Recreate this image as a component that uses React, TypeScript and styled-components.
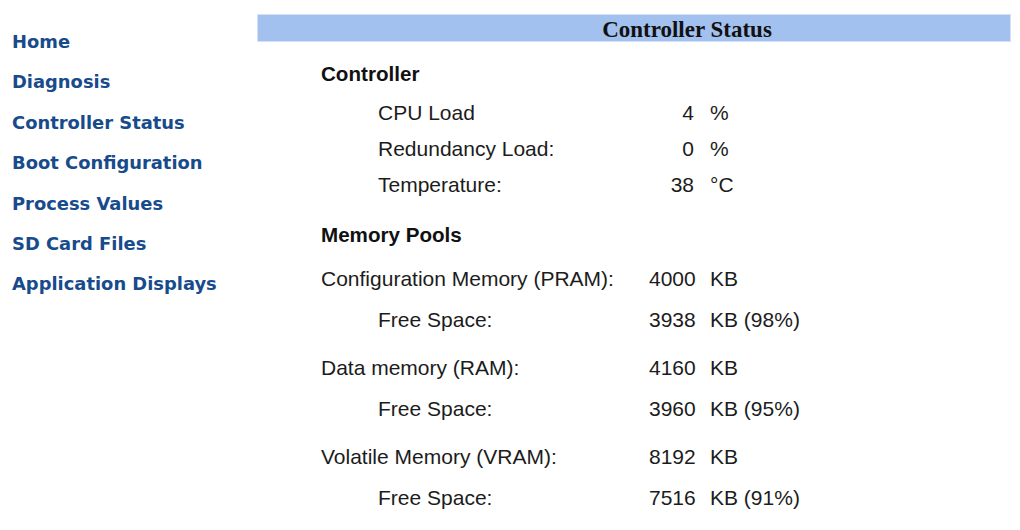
import React from "react";
import styled, { createGlobalStyle } from "styled-components";

const GlobalStyle = createGlobalStyle`
  html, body {
    margin: 0;
    padding: 0;
    background: #ffffff;
  }
  body {
    font-family: "Liberation Sans", Arial, sans-serif;
    color: #1c1c1c;
  }
`;

const Page = styled.div`
  display: flex;
  width: 1020px;
  height: 530px;
  overflow: hidden;
`;

const Sidebar = styled.nav`
  display: flex;
  flex-direction: column;
  width: 245px;
  flex: none;
  padding: 22px 0 0 12px;
`;

const NavLink = styled.a`
  display: block;
  font-family: "DejaVu Sans", Verdana, sans-serif;
  font-weight: bold;
  font-size: 17.9px;
  line-height: 40.4px;
  color: #174b8b;
  text-decoration: none;
  white-space: nowrap;
`;

const Main = styled.main`
  flex: 1;
  margin-right: 9px;
  padding-top: 14px;
`;

const TitleBar = styled.div`
  height: 26px;
  border: 1px solid #d3e0f6;
  background: #a2c1ef;
  padding-left: 106px;
  text-align: center;
  font-family: "Liberation Serif", "Times New Roman", serif;
  font-weight: bold;
  font-size: 23px;
  line-height: 30px;
  color: #111111;
`;

const Content = styled.div`
  padding-left: 64px;
`;

const Heading = styled.div<{ $after: number }>`
  margin: 17px 0 ${(p) => p.$after}px;
  height: 30px;
  line-height: 30px;
  font-weight: bold;
  font-size: 20.6px;
  color: #111111;
`;

const Groups = styled.div`
  display: flex;
  flex-direction: column;
  gap: 8px;
`;

const Row = styled.div<{ $h: number }>`
  display: grid;
  grid-template-columns: 312px 45px auto;
  column-gap: 16px;
  align-items: center;
  height: ${(p) => p.$h}px;
  font-size: 21px;
  white-space: nowrap;
`;

const Label = styled.span<{ $indent?: boolean }>`
  padding-left: ${(p) => (p.$indent ? 57 : 0)}px;
`;

const Value = styled.span`
  text-align: right;
`;

const Unit = styled.span``;

const NAV = [
  "Home",
  "Diagnosis",
  "Controller Status",
  "Boot Configuration",
  "Process Values",
  "SD Card Files",
  "Application Displays",
];

const CONTROLLER = [
  { label: "CPU Load", value: "4", unit: "%" },
  { label: "Redundancy Load:", value: "0", unit: "%" },
  { label: "Temperature:", value: "38", unit: "°C" },
];

const MEMORY = [
  { label: "Configuration Memory (PRAM):", total: "4000", free: "3938", pct: "98%" },
  { label: "Data memory (RAM):", total: "4160", free: "3960", pct: "95%" },
  { label: "Volatile Memory (VRAM):", total: "8192", free: "7516", pct: "91%" },
];

export default function App() {
  return (
    <Page>
      <GlobalStyle />
      <Sidebar>
        {NAV.map((item) => (
          <NavLink key={item} href="#">
            {item}
          </NavLink>
        ))}
      </Sidebar>

      <Main>
        <TitleBar>Controller Status</TitleBar>
        <Content>
          <Heading $after={6}>Controller</Heading>
          {CONTROLLER.map((row) => (
            <Row key={row.label} $h={36}>
              <Label $indent>{row.label}</Label>
              <Value>{row.value}</Value>
              <Unit>{row.unit}</Unit>
            </Row>
          ))}

          <Heading $after={9}>Memory Pools</Heading>
          <Groups>
            {MEMORY.map((pool) => (
              <div key={pool.label}>
                <Row $h={40.5}>
                  <Label>{pool.label}</Label>
                  <Value>{pool.total}</Value>
                  <Unit>KB</Unit>
                </Row>
                <Row $h={40.5}>
                  <Label $indent>Free Space:</Label>
                  <Value>{pool.free}</Value>
                  <Unit>KB ({pool.pct})</Unit>
                </Row>
              </div>
            ))}
          </Groups>
        </Content>
      </Main>
    </Page>
  );
}
